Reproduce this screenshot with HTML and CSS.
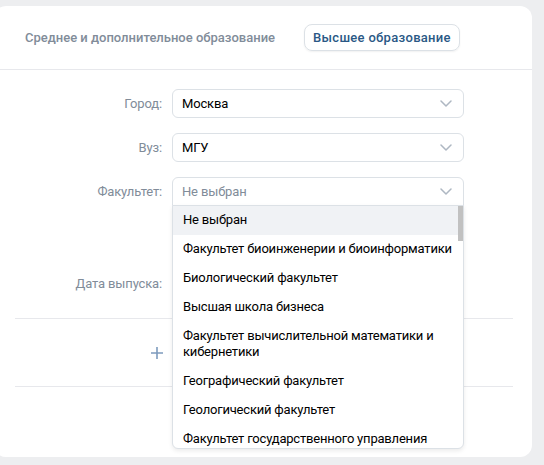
FILE: index.html
```html
<!DOCTYPE html>
<html lang="ru">
<head>
<meta charset="utf-8">
<link rel="stylesheet" href="styles.css">
</head>
<body>
<div class="card">
  <div class="tabs">
    <span class="tab">Среднее и дополнительное образование</span>
    <span class="tab tab-active">Высшее образование</span>
  </div>
  <div class="form">
    <div class="row">
      <label class="label">Город:</label>
      <div class="select"><span class="value">Москва</span><svg class="chev" width="12" height="7" viewBox="0 0 12 7"><path d="M1 1l5 5 5-5" fill="none" stroke="#aeb7c2" stroke-width="1.5" stroke-linecap="round" stroke-linejoin="round"/></svg></div>
    </div>
    <div class="row">
      <label class="label">Вуз:</label>
      <div class="select"><span class="value">МГУ</span><svg class="chev" width="12" height="7" viewBox="0 0 12 7"><path d="M1 1l5 5 5-5" fill="none" stroke="#aeb7c2" stroke-width="1.5" stroke-linecap="round" stroke-linejoin="round"/></svg></div>
    </div>
    <div class="row">
      <label class="label">Факультет:</label>
      <div class="select select-open"><span class="value placeholder">Не выбран</span><svg class="chev" width="12" height="7" viewBox="0 0 12 7"><path d="M1 1l5 5 5-5" fill="none" stroke="#aeb7c2" stroke-width="1.5" stroke-linecap="round" stroke-linejoin="round"/></svg>
        <div class="dropdown">
          <div class="option option-hover">Не выбран</div>
          <div class="option">Факультет биоинженерии и биоинформатики</div>
          <div class="option">Биологический факультет</div>
          <div class="option">Высшая школа бизнеса</div>
          <div class="option">Факультет вычислительной математики и кибернетики</div>
          <div class="option">Географический факультет</div>
          <div class="option">Геологический факультет</div>
          <div class="option">Факультет государственного управления</div>
          <div class="thumb"></div>
        </div>
      </div>
    </div>
    <div class="row row-date">
      <label class="label">Дата выпуска:</label>
      <div class="select"><span class="value placeholder"></span><svg class="chev" width="12" height="7" viewBox="0 0 12 7"><path d="M1 1l5 5 5-5" fill="none" stroke="#aeb7c2" stroke-width="1.5" stroke-linecap="round" stroke-linejoin="round"/></svg></div>
    </div>
  </div>
  <div class="divider"></div>
  <div class="add">
    <svg class="plus" width="12" height="12" viewBox="0 0 12 12"><path d="M6 0v12M0 6h12" stroke="#7d9bbd" stroke-width="1.6"/></svg>
  </div>
  <div class="divider"></div>
  <div class="actions">
    <span class="save"></span>
  </div>
</div>
</body>
</html>
```
FILE: styles.css
```css
html, body {
  margin: 0;
  padding: 0;
  background: #edeef0;
  font-family: Roboto, "Noto Sans", Arial, sans-serif;
  font-size: 13px;
}

.card {
  box-sizing: border-box;
  width: 538px;
  height: 451px;
  margin: 6px 0 0 -6px;
  background: #fff;
  border-radius: 12px;
}

.tabs {
  box-sizing: border-box;
  height: 64px;
  display: flex;
  align-items: center;
  gap: 19px;
  padding-left: 21px;
  border-bottom: 1px solid #e7e8ec;
}

.tab {
  box-sizing: border-box;
  height: 27px;
  line-height: 25px;
  padding: 0 9px;
  border: 1px solid transparent;
  border-radius: 8px;
  color: #818c99;
  font-weight: 500;
  white-space: nowrap;
}

.tab-active {
  padding: 0 8px;
  letter-spacing: 0.3px;
  color: #2a5885;
  border-color: #dce1e6;
  box-shadow: 0 1px 2px rgba(0, 0, 0, 0.06);
}

.form {
  padding: 19px 0 20px;
  display: flex;
  flex-direction: column;
  gap: 15px;
}

.row {
  display: grid;
  grid-template-columns: 168px 292px;
  column-gap: 10px;
  align-items: center;
}

.row-date {
  margin-top: 48px;
}

.label {
  text-align: right;
  color: #818c99;
  letter-spacing: -0.15px;
}

.select {
  position: relative;
  box-sizing: border-box;
  height: 29px;
  border: 1px solid #dce1e6;
  border-radius: 6px;
  display: flex;
  align-items: center;
  padding: 0 10px 0 9px;
  color: #000;
}

.value {
  flex: 1;
  letter-spacing: -0.15px;
}

.placeholder {
  color: #818c99;
}

.chev {
  display: block;
  margin-right: 1px;
}

.select-open {
  border-radius: 6px 6px 0 0;
}

.dropdown {
  position: absolute;
  left: -1px;
  right: -1px;
  top: 27px;
  height: 244px;
  overflow: hidden;
  box-sizing: border-box;
  background: #fff;
  border: 1px solid #dce1e6;
  border-radius: 0 0 6px 6px;
  box-shadow: 0 2px 4px rgba(0, 0, 0, 0.08);
  z-index: 5;
}

.option {
  padding: 6px 2px 7px 10px;
  line-height: 16px;
  color: #000;
  letter-spacing: -0.2px;
}

.option-hover {
  background: #f0f2f5;
}

.thumb {
  position: absolute;
  right: 0;
  top: 0;
  width: 5px;
  height: 35px;
  background: #c1c1c1;
}

.divider {
  height: 1px;
  margin: 0 19px 0 21px;
  background: #e7e8ec;
}

.add {
  height: 67px;
  display: flex;
  align-items: center;
  padding-left: 157px;
}

.plus {
  display: block;
}

.actions {
  padding: 23px 0 0 178px;
}

.save {
  display: block;
  width: 110px;
  height: 30px;
  border-radius: 6px;
  background: #5181b8;
}
```
